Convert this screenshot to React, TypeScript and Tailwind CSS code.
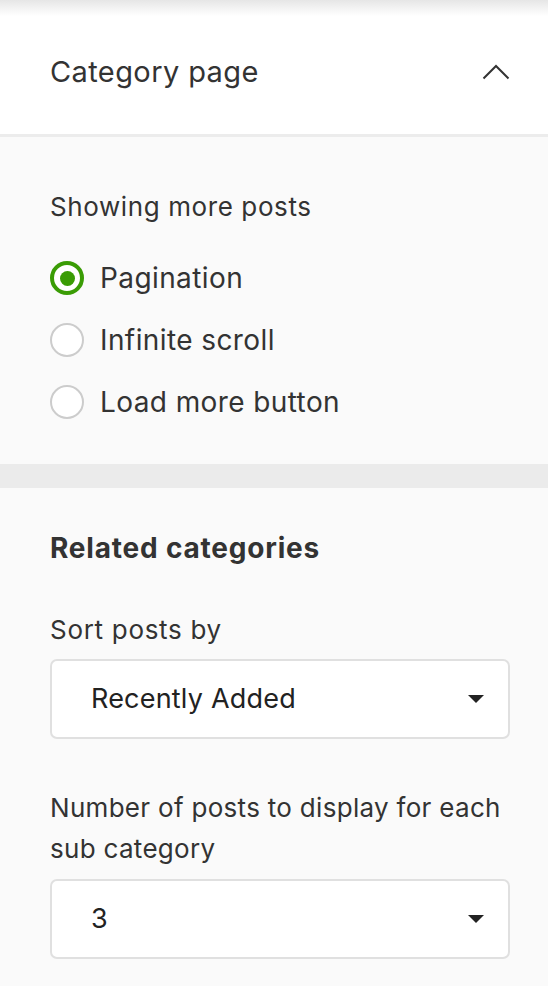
import { useState } from "react";

const options = ["Pagination", "Infinite scroll", "Load more button"];

function Radio({ checked }: { checked: boolean }) {
  return checked ? (
    <span className="flex size-[34px] items-center justify-center rounded-full border-[4px] border-[#3a9c05] bg-white">
      <span className="size-[15px] rounded-full bg-[#3a9c05]" />
    </span>
  ) : (
    <span className="size-[34px] rounded-full border-2 border-[#cccccc] bg-white" />
  );
}

function Select({ value }: { value: string }) {
  return (
    <div className="flex h-[80px] items-center justify-between rounded-[7px] border-2 border-[#e0e0e0] bg-white pl-[39px] pr-[24px]">
      <span className="text-[27px] tracking-[0.2px] text-[#222]">{value}</span>
      <svg width="16" height="9" viewBox="0 0 16 9">
        <path d="M0 0h16L8 8z" fill="#222" />
      </svg>
    </div>
  );
}

export default function App() {
  const [selected, setSelected] = useState(0);

  return (
    <div className="min-h-screen bg-[#fafafa] text-[#333] font-['Inter','Noto_Sans',sans-serif]">
      {/* header */}
      <div className="relative bg-white border-b-[3px] border-[#ececec]">
        <div className="absolute inset-x-0 top-0 h-[16px] bg-gradient-to-b from-[#e6e6e6] to-white/0" />
        <div className="flex h-[134px] items-center justify-between pl-[50px] pr-[38px] pt-[10px]">
          <span className="text-[29px] tracking-[0.4px]">Category page</span>
          <svg width="28" height="16" viewBox="0 0 28 16" fill="none">
            <path d="M1.5 14.5L14 2L26.5 14.5" stroke="#333" strokeWidth="2" />
          </svg>
        </div>
      </div>

      {/* showing more posts */}
      <div className="px-[50px] pt-[54px] pb-[45px]">
        <p className="text-[26px] leading-[32px] tracking-[0.6px]">Showing more posts</p>
        <div className="mt-[38px] flex flex-col gap-[28px]">
          {options.map((o, i) => (
            <button
              key={o}
              type="button"
              onClick={() => setSelected(i)}
              className="flex h-[34px] items-center gap-[16px] text-left"
            >
              <Radio checked={selected === i} />
              <span className="text-[28px] tracking-[0.4px]">{o}</span>
            </button>
          ))}
        </div>
      </div>

      <div className="h-[24px] bg-[#ebebeb]" />

      {/* related categories */}
      <div className="pl-[50px] pr-[38px] pt-[43px]">
        <h2 className="text-[28px] font-bold leading-[34px] tracking-[0.8px]">Related categories</h2>
        <p className="mt-[49px] text-[26px] leading-[32px] tracking-[0.7px]">Sort posts by</p>
        <div className="mt-[13px]">
          <Select value="Recently Added" />
        </div>
        <p className="mt-[48px] text-[26px] leading-[41px] tracking-[0.3px]">
          Number of posts to display for each sub category
        </p>
        <div className="mt-[10px]">
          <Select value="3" />
        </div>
      </div>
    </div>
  );
}
